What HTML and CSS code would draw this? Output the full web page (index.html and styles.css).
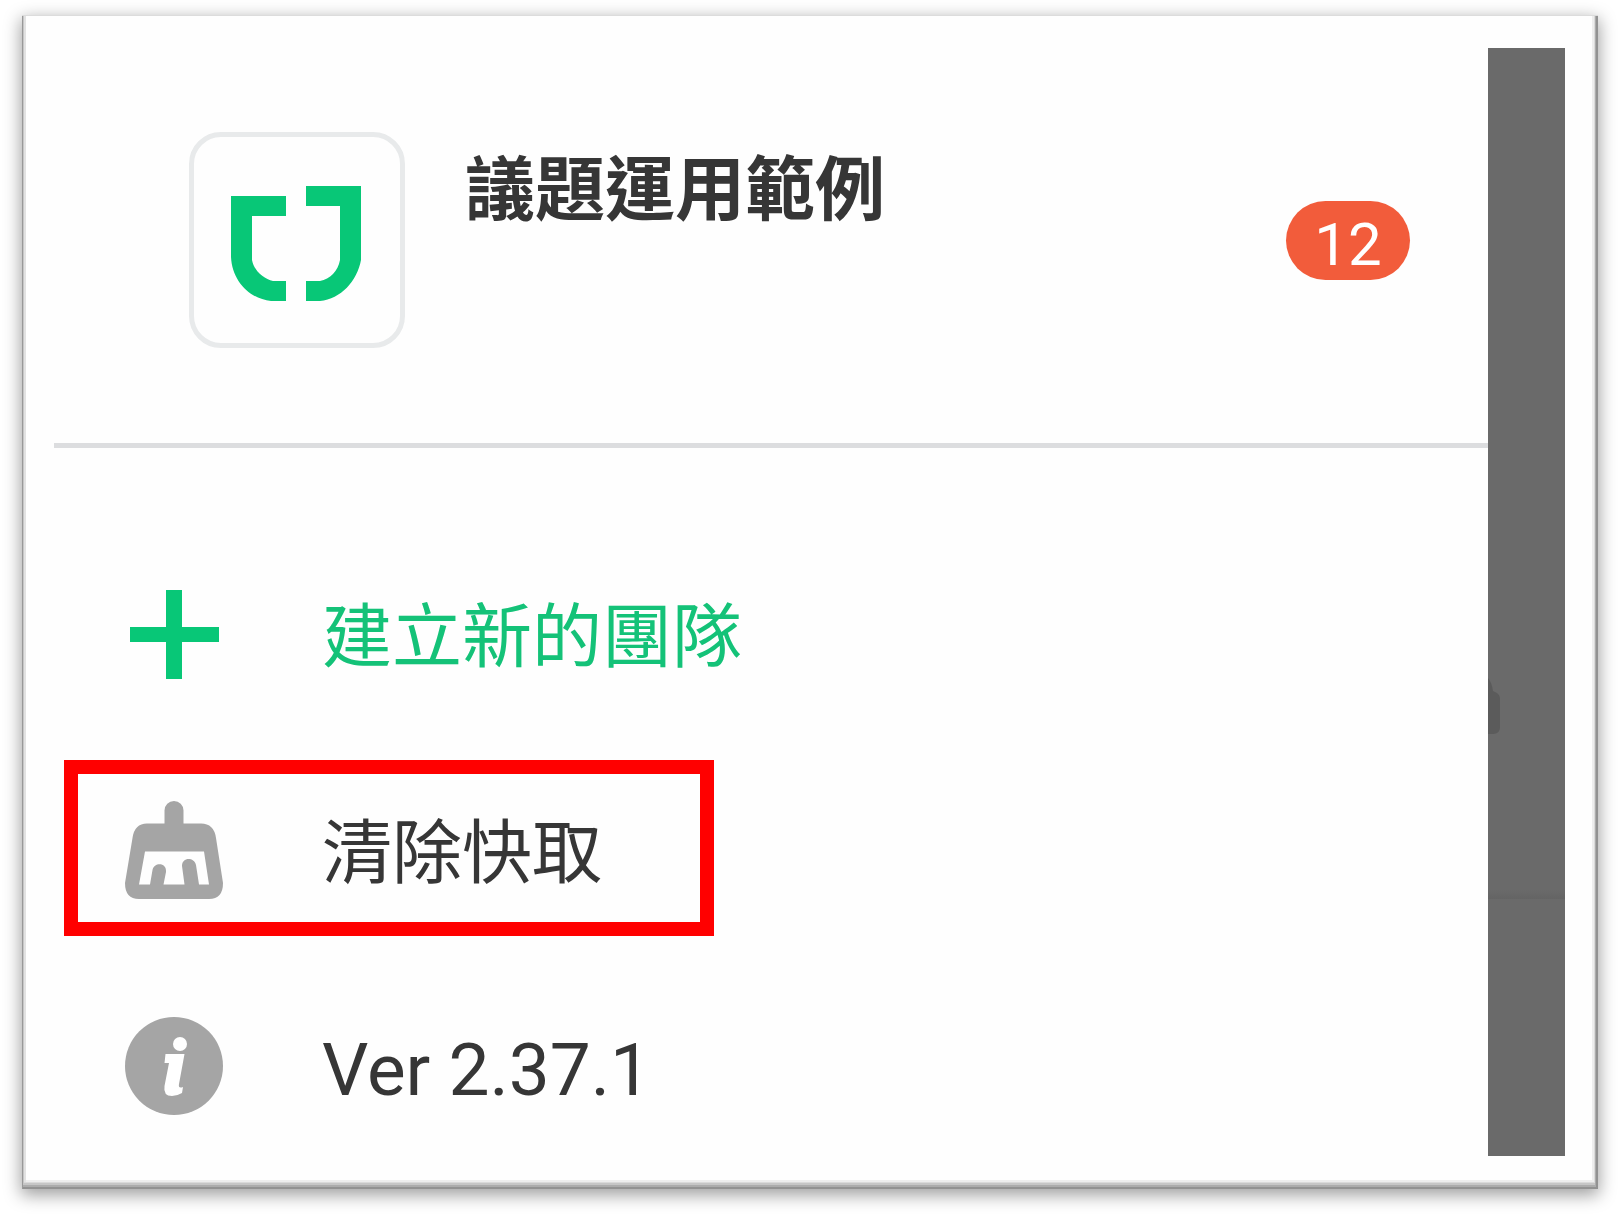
FILE: index.html
```html
<!DOCTYPE html>
<html lang="zh-Hant">
<head>
    <meta charset="UTF-8">
    <meta name="viewport" content="width=device-width, initial-scale=1.0">
    <title>議題運用範例</title>
    <link rel="stylesheet" href="styles.css">
</head>
<body>
    <div class="frame">
        <main class="drawer">
            <header class="team">
                <svg class="team-logo" viewBox="0 0 206 206" aria-hidden="true">
                    <path d="M37 59H92V79H58V123C60 134 70 142 79 144H92V164H77C56 162 38 144 37 120Z"/>
                    <path d="M112 49H167V123C163 144 147 162 126 164H112V144H126C136 142 144 134 146 123V69H112Z"/>
                </svg>
                <h1>議題運用範例</h1>
                <span class="badge">12</span>
            </header>

            <nav class="menu">
                <button type="button" class="menu-item create">
                    <svg class="icon" viewBox="0 0 98 98" aria-hidden="true">
                        <path d="M41 5H57V42H94V57H57V94H41V57H5V42H41Z"/>
                    </svg>
                    <span>建立新的團隊</span>
                </button>
                <button type="button" class="menu-item highlight">
                    <svg class="icon" viewBox="0 0 98 98" aria-hidden="true">
                        <path fill-rule="evenodd" d="M39.500 9.500A9.500 9.500 0 0 1 58.500 9.500V22.500H76Q89 22.500 91 37L98 82Q98 98 84 98H14Q0 98 0 82L7.500 37Q9.500 22.500 22 22.500H39.500ZM20 50.500L14 83.500H25L27.500 69C29 61 42 61 41 71L38.500 83.500H59.500L57 65C57 56 69 56 71 64L74 83.500H84L79 50.500Z"/>
                    </svg>
                    <span>清除快取</span>
                </button>
                <div class="menu-item">
                    <svg class="icon" viewBox="0 0 98 98" aria-hidden="true">
                        <circle cx="49" cy="49" r="49"/>
                        <ellipse class="mark" cx="55" cy="27" rx="7" ry="7"/>
                        <path class="mark" d="M40.500 37H59.500L54 67Q53 72 58 70L57 76Q52 79 47 79Q38 79 39.500 69L44 46H39.500Z"/>
                    </svg>
                    <span class="version">Ver 2.37.1</span>
                </div>
            </nav>
        </main>

        <div class="backdrop">
            <svg class="backdrop-icon" viewBox="0 0 12 56" aria-hidden="true">
                <path d="M0 0Q4 5 5 13L9 15Q12 17 12 21V49Q12 56 5 56H0Z"/>
            </svg>
            <div class="backdrop-line"></div>
        </div>
    </div>
</body>
</html>
```
FILE: styles.css
```css
* {
    box-sizing: border-box;
}
body {
    margin: 0;
    padding: 15px 21px 28px 22px;
    background-color: #fff;
    color: #363636;
    font-family: Roboto, "Noto Sans CJK TC", sans-serif;
}

/* Outer frame with bevel and drop shadow */
.frame {
    display: flex;
    padding: 33px 33px 33px 32px;
    background-color: #fefefe;
    box-shadow:
        inset 0 1px #dcdcdc,
        inset 1px 0 #989898,
        inset -2px -2px #929292,
        inset -3px -4px #acacac,
        inset 2px -6px #c6c6c6,
        inset -4px -7px #dadada,
        inset 4px 0 #e2e2e2,
        inset -6px -9px #eee,
        0 5px 16px 1px rgba(0, 0, 0, 0.38);
}
.drawer {
    flex: 1;
    min-width: 0;
}

/* Current team */
.team {
    display: flex;
    align-items: flex-start;
    padding: 84px 78px 95px 135px;
    border-bottom: 5px solid #dcdddf;
}
.team-logo {
    flex: none;
    width: 216px;
    height: 216px;
    border: 5px solid #e8eaeb;
    border-radius: 32px;
    fill: #08c777;
}
.team h1 {
    flex: 1;
    margin: 0 0 0 60px;
    font-size: 70px;
    line-height: 118px;
    font-weight: 700;
}
.badge {
    align-self: center;
    width: 124px;
    padding-top: 8px;
    border-radius: 40px;
    background-color: #f25c3b;
    color: #fff;
    font-size: 60px;
    line-height: 71px;
    text-align: center;
}

/* Menu */
.menu {
    display: flex;
    flex-direction: column;
    gap: 116px;
    padding: 136px 0 40px 71px;
}
.menu-item {
    position: relative;
    display: flex;
    align-items: center;
    gap: 99px;
    height: 100px;
    padding: 0;
    border: none;
    background: none;
    color: inherit;
    font-family: inherit;
    font-size: 70px;
    line-height: 92px;
    text-align: left;
}
.menu-item span {
    padding-top: 8px;
}
button.menu-item {
    cursor: pointer;
}
.icon {
    flex: none;
    width: 98px;
    height: 98px;
    fill: #a5a5a5;
}
.mark {
    fill: #fff;
}
.create {
    color: #14c278;
}
.create .icon {
    fill: #08c777;
}
.menu-item .version {
    font-size: 73px;
}
.highlight::after {
    content: "";
    position: absolute;
    top: -40px;
    bottom: -36px;
    left: -61px;
    width: 622px;
    border: 14px solid #f00;
}

/* Dimmed page behind the drawer */
.backdrop {
    position: relative;
    width: 77px;
    background-color: #6a6a6a;
}
.backdrop-icon {
    position: absolute;
    top: 630px;
    left: 0;
    width: 12px;
    height: 56px;
    fill: #5b5b5b;
}
.backdrop-line {
    position: absolute;
    top: 842px;
    left: 0;
    right: 0;
    height: 9px;
    background: linear-gradient(#6a6a6a, #646464);
}
```
